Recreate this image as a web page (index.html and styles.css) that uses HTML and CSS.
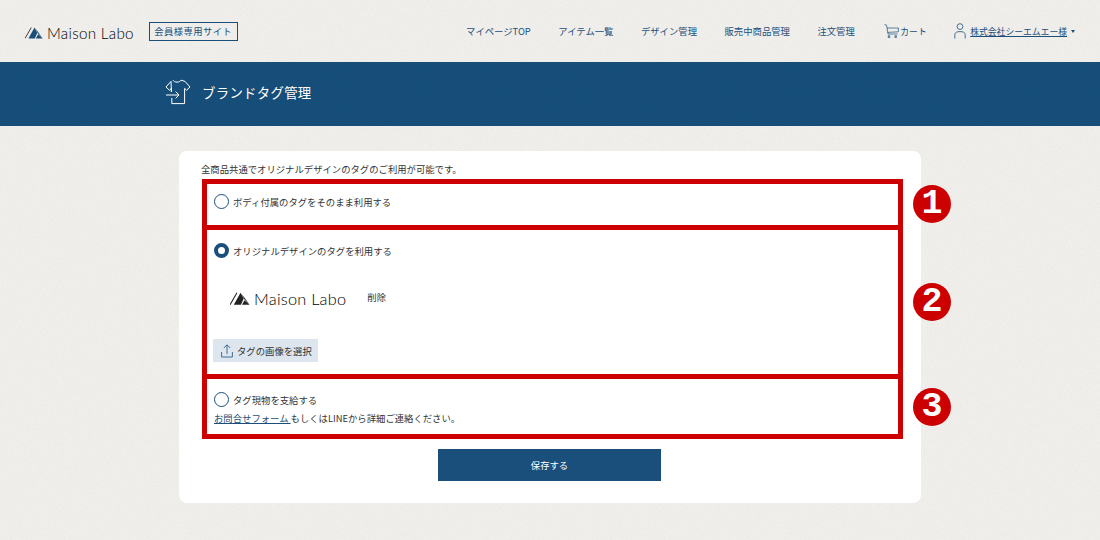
FILE: index.html
```html
<!DOCTYPE html>
<html lang="ja">
<head>
  <meta charset="UTF-8">
  <meta name="viewport" content="width=device-width, initial-scale=1.0">
  <title>ブランドタグ管理 - Maison Labo</title>
  <link rel="stylesheet" href="styles.css">
</head>
<body>
  <header class="site-header">
    <div class="brand">
      <div class="logo">
        <svg class="logo-mark" viewBox="0 0 19 12" width="18" height="11.4"><path d="M0 12 L6.6 .6" fill="none" stroke="#333" stroke-width="1"/><path d="M3.6 12 L10 0.5 L13 6 L10.4 12 Z M11.4 12 L13.8 7.6 L18.6 12 Z M11 1.4 L18.6 12 L13.6 6.8 Z" fill="#1b4f7b"/></svg>
        <span class="logo-text">Maison Labo</span>
      </div>
      <span class="member-badge">会員様専用サイト</span>
    </div>
    <nav class="main-nav">
      <a href="#">マイページTOP</a>
      <a href="#">アイテム一覧</a>
      <a href="#">デザイン管理</a>
      <a href="#">販売中商品管理</a>
      <a href="#">注文管理</a>
      <a href="#" class="nav-cart">
        <svg viewBox="0 0 15 14" width="15" height="14" fill="none" stroke="#1b4f7b" stroke-width=".7"><path d="M.5 .5 L2.6 1.2 L4 10 H13.6 M3 4 H14.4 V7.8 L3.7 8.4"/><rect x="4.2" y="11.8" width="1.6" height="1.6"/><rect x="11" y="11.8" width="1.6" height="1.6"/></svg>
        カート
      </a>
      <div class="nav-user">
        <svg viewBox="0 0 12 16" width="12" height="16" fill="none" stroke="#1b4f7b" stroke-width=".8"><circle cx="6" cy="3.6" r="2.9"/><path d="M.8 15.5 V11.6 C.8 9.4 3 8.6 6 8.6 C9 8.6 11.2 9.4 11.2 11.6 V15.5"/></svg>
        <a href="#" class="user-name">株式会社シーエムエー様</a>
        <span class="caret"></span>
      </div>
    </nav>
  </header>

  <section class="page-title">
    <svg class="title-icon" viewBox="0 0 26 26" width="26" height="26" fill="none" stroke="#fff" stroke-width="1"><path d="M8 1.2 C9.5 3.8 14.5 3.8 16 1.2 L20 2.4 L25 8 L21.6 11.2 L19.6 9.4 V24.6 H6.8 V19 M6.4 13 V9.4 L4.4 11.2 L1 8 L6 2.4 Z"/><path d="M1 16 H14 M10.6 12.6 L14 16 L10.6 19.4"/></svg>
    <h1>ブランドタグ管理</h1>
  </section>

  <main class="content">
    <div class="card">
      <p class="lead">全商品共通でオリジナルデザインのタグのご利用が可能です。</p>
      <div class="choices">
        <div class="choice choice-body">
          <label class="radio-row"><span class="radio"></span>ボディ付属のタグをそのまま利用する</label>
          <span class="num">1</span>
        </div>
        <div class="choice choice-original">
          <label class="radio-row"><span class="radio checked"></span>オリジナルデザインのタグを利用する</label>
          <div class="tag-preview">
            <div class="logo logo-large">
              <svg class="logo-mark" viewBox="0 0 19 12" width="20" height="13"><path d="M0 12 L6.6 .6" fill="none" stroke="#222" stroke-width="1"/><path d="M3.6 12 L10 0.5 L13 6 L10.4 12 Z M11.4 12 L13.8 7.6 L18.6 12 Z M11 1.4 L18.6 12 L13.6 6.8 Z" fill="#222"/></svg>
              <span class="logo-text">Maison Labo</span>
            </div>
            <a href="#" class="delete-link">削除</a>
          </div>
          <button class="upload-btn" type="button">
            <svg viewBox="0 0 12 14" width="12" height="14" fill="none" stroke="#1b4f7b" stroke-width=".8"><path d="M6 10 V1 M2.8 4 L6 .8 L9.2 4 M.6 8 V13 H11.4 V8"/></svg>
            タグの画像を選択
          </button>
          <span class="num">2</span>
        </div>
        <div class="choice choice-supply">
          <label class="radio-row"><span class="radio"></span>タグ現物を支給する</label>
          <p class="note"><a href="#">お問合せフォーム </a>もしくはLINEから詳細ご連絡ください。</p>
          <span class="num">3</span>
        </div>
      </div>
      <button class="save-btn" type="button">保存する</button>
    </div>
  </main>
</body>
</html>
```
FILE: styles.css
```css
* {
  box-sizing: border-box;
}
body {
  margin: 0;
  height: 540px;
  overflow: hidden;
  font-family: 'Noto Sans CJK JP', 'Noto Sans', sans-serif;
  font-size: 9.36px;
  color: #333;
  background-color: #f1f0ed;
  background-image: url("data:image/svg+xml,%3Csvg xmlns='http://www.w3.org/2000/svg' width='300' height='300'%3E%3Cfilter id='n'%3E%3CfeTurbulence type='fractalNoise' baseFrequency='.7' numOctaves='3'/%3E%3CfeColorMatrix values='0 0 0 0 .5 0 0 0 0 .5 0 0 0 0 .48 0 0 0 .2 -.05'/%3E%3C/filter%3E%3Crect width='300' height='300' filter='url(%23n)'/%3E%3C/svg%3E");
}
a {
  color: inherit;
  text-decoration: none;
}

/* header */
.site-header {
  height: 62px;
  display: flex;
  align-items: center;
  justify-content: space-between;
  padding: 0 25px;
}
.brand {
  display: flex;
  align-items: center;
  gap: 15px;
}
.logo {
  display: flex;
  align-items: center;
  gap: 4px;
  margin-top: 4px;
}
.logo-mark {
  flex-shrink: 0;
}
.logo-text {
  font-family: 'Lato', sans-serif;
  font-size: 15.2px;
  font-weight: 300;
  letter-spacing: .3px;
  color: #000;
}
.member-badge {
  width: 89px;
  height: 19px;
  line-height: 17px;
  text-align: center;
  border: 1px solid #1b4f7b;
  color: #1b4f7b;
  letter-spacing: .4px;
}
.main-nav {
  display: flex;
  align-items: center;
  gap: 27.5px;
  color: #1b4f7b;
}
.nav-cart,
.nav-user {
  display: flex;
  align-items: center;
  gap: 1px;
  font-size: 8.8px;
}
.nav-cart {
  margin-left: 2px;
}
.nav-user {
  gap: 4px;
}
.user-name {
  text-decoration: underline;
}
.caret {
  border: 2px solid transparent;
  border-top: 3px solid #1b4f7b;
  border-bottom: 0;
}

/* title band */
.page-title {
  height: 64px;
  background-color: #1a4c79;
  background-image: url("data:image/svg+xml,%3Csvg xmlns='http://www.w3.org/2000/svg' width='300' height='300'%3E%3Cfilter id='n'%3E%3CfeTurbulence type='fractalNoise' baseFrequency='.8' numOctaves='3'/%3E%3CfeColorMatrix values='0 0 0 0 0 0 0 0 0 .1 0 0 0 0 .2 0 0 0 .5 -.1'/%3E%3C/filter%3E%3Crect width='300' height='300' filter='url(%23n)'/%3E%3C/svg%3E");
  display: flex;
  align-items: center;
  gap: 11px;
  padding-left: 165px;
  color: #fff;
}
.title-icon {
  margin-top: -4px;
}
.page-title h1 {
  margin: -4px 0 0;
  font-size: 13.4px;
  font-weight: 400;
  letter-spacing: .3px;
}

/* card */
.content {
  padding-top: 25px;
}
.card {
  width: 742px;
  height: 352px;
  margin-left: 179px;
  padding: 11px 18px 0 22px;
  background: #fff;
  border-radius: 8px;
}
.lead {
  margin: 0;
  height: 17px;
  line-height: 14px;
}
.choices {
  display: flex;
  flex-direction: column;
  margin-left: 1px;
}
.choice {
  position: relative;
  border: 5px solid #cc0000;
  padding: 0 7px;
}
.choice + .choice {
  border-top: 0;
}
.choice-body {
  height: 51px;
  padding-top: 10px;
}
.choice-original {
  height: 149px;
  padding-top: 13px;
}
.choice-supply {
  height: 60px;
  padding-top: 13px;
}
.radio-row {
  display: flex;
  align-items: center;
  gap: 4px;
  height: 15px;
}
.radio {
  width: 15px;
  height: 15px;
  border: 1px solid #1b4f7b;
  border-radius: 50%;
  background: #fff;
}
.radio.checked {
  border: 4px solid #1b4f7b;
}
.tag-preview {
  display: flex;
  align-items: center;
  gap: 21px;
  height: 30px;
  margin-top: 25px;
  padding-left: 16px;
}
.tag-preview .logo {
  margin-top: 0;
}
.logo-large .logo-text {
  font-size: 16.3px;
  letter-spacing: .25px;
}
.delete-link {
  margin-top: -3px;
}
.upload-btn {
  display: flex;
  align-items: center;
  gap: 4px;
  width: 105px;
  height: 23px;
  margin: 26px 0 0 -1px;
  padding: 0 0 0 8px;
  border: 0;
  background: #dde6ee;
  color: #333;
  font: inherit;
  white-space: nowrap;
}
.upload-btn svg {
  flex-shrink: 0;
}
.note {
  margin: 4px 0 0;
  line-height: 15px;
}
.note a {
  color: #1b4f7b;
  text-decoration: underline;
}
.num {
  position: absolute;
  right: -53px;
  width: 38px;
  height: 38px;
  border-radius: 50%;
  background: #cc0000;
  color: #fff;
  font-family: 'Liberation Mono', monospace;
  font-size: 35px;
  font-weight: 700;
  line-height: 38px;
  text-align: center;
}
.choice-body .num {
  top: 1px;
}
.choice-original .num {
  top: 53px;
}
.choice-supply .num {
  top: 9px;
}
.save-btn {
  display: block;
  width: 223px;
  height: 32px;
  margin: 10px 0 0 237px;
  border: 0;
  background: #1b4f7b;
  color: #fff;
  font: inherit;
}
```
